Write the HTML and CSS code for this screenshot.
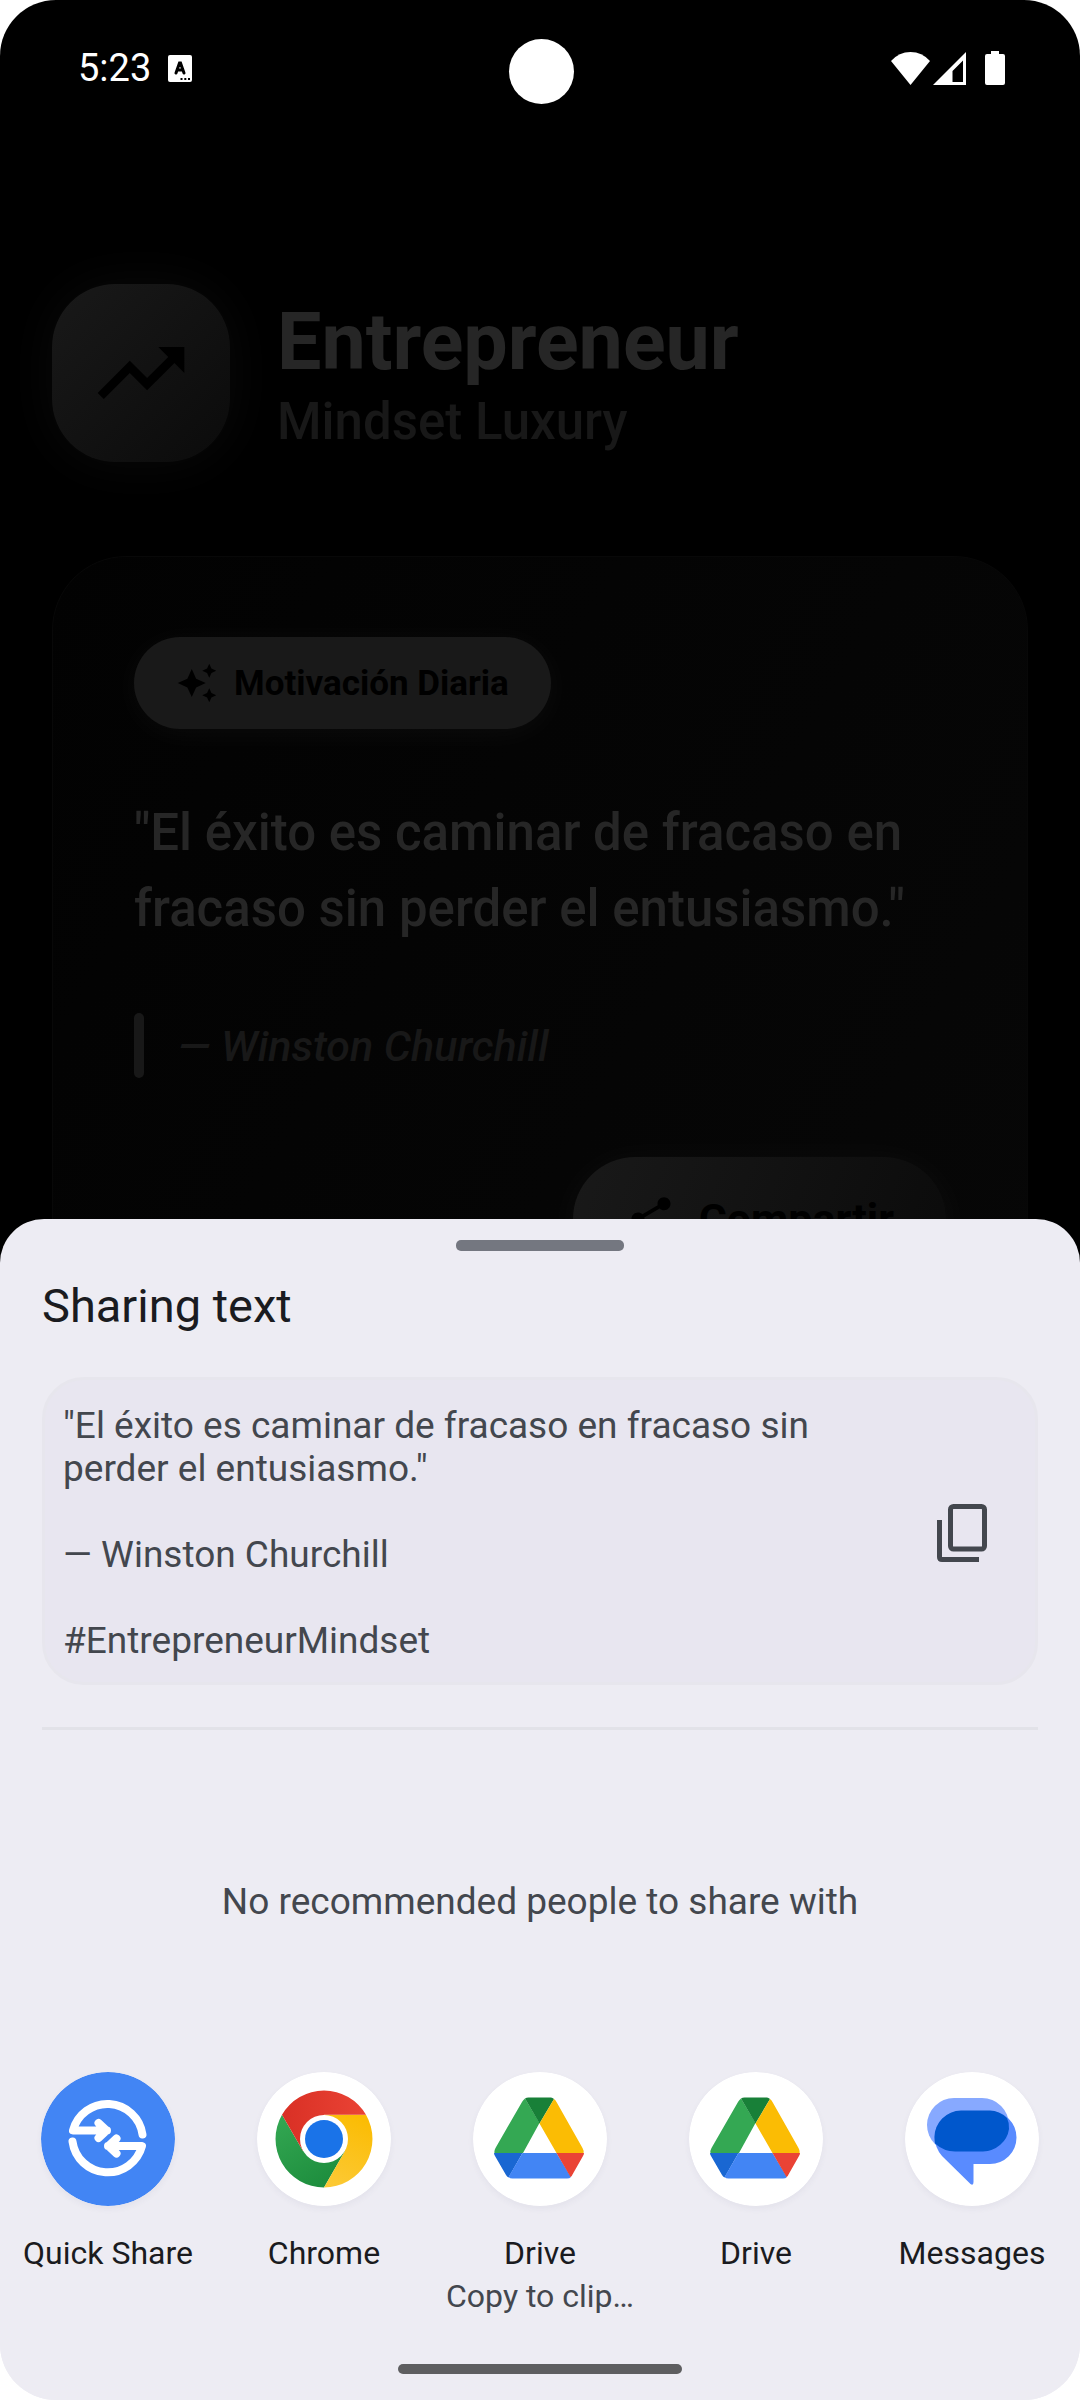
FILE: index.html
```html
<!DOCTYPE html>
<html lang="es">
<head>
<meta charset="utf-8">
<meta name="viewport" content="width=device-width, initial-scale=1">
<title>Entrepreneur Mindset Luxury</title>
<link rel="stylesheet" href="styles.css">
</head>
<body>
<div class="phone">
  <header class="status">
    <div class="status-left">
      <span>5:23</span>
      <svg class="status-app" viewBox="0 0 24 27" aria-hidden="true"><rect width="24" height="27" rx="2" fill="#fff"/><path d="M8 18 11.500 8h1L16 18M9.500 15h5" fill="none" stroke="#000" stroke-width="3" stroke-linecap="round"/><path d="M12.500 23h2v2h-2zM16.300 23h2v2h-2zM20 23h2v2h-2z"/></svg>
    </div>
    <div class="camera"></div>
    <div class="status-right">
      <svg class="wifi" viewBox="0 0 39 33" aria-hidden="true"><path d="M0 9Q8 0 19.500 0T39 9L19.500 33z" fill="#fff"/></svg>
      <svg class="signal" viewBox="0 0 33 33" aria-hidden="true"><path fill="#fff" fill-rule="evenodd" d="M33 0v33H0zM30 8.500 19.500 19v11H30z"/></svg>
      <svg class="battery" viewBox="0 0 20 34" aria-hidden="true"><path fill="#fff" d="M6 0h8v3h4q2 0 2 2v27q0 2-2 2H2q-2 0-2-2V5q0-2 2-2h4z"/></svg>
    </div>
  </header>

  <main class="app">
    <div class="brand">
      <div class="brand-icon">
        <svg viewBox="0 0 24 24" aria-hidden="true"><path d="m16 6 2.290 2.290-4.880 4.880-4-4L2 16.590 3.410 18l6-6 4 4 6.300-6.290L22 12V6z"/></svg>
      </div>
      <div class="brand-name">
        <h1>Entrepreneur</h1>
        <p class="tagline">Mindset Luxury</p>
      </div>
    </div>

    <article class="card">
      <div class="chip">
        <svg viewBox="0 0 24 24" aria-hidden="true"><path d="m19 9 1.250-2.750L23 5l-2.750-1.250L19 1l-1.250 2.750L15 5l2.750 1.250zM11.500 9.500 9 4 6.500 9.500 1 12l5.500 2.500L9 20l2.500-5.500L17 12zM19 15l-1.250 2.750L15 19l2.750 1.250L19 23l1.250-2.750L23 19l-2.750-1.250z"/></svg>
        <span>Motivación Diaria</span>
      </div>
      <blockquote>"El éxito es caminar de fracaso en fracaso sin perder el entusiasmo."</blockquote>
      <div class="author"><i class="bar"></i><cite>— Winston Churchill</cite></div>
      <button class="share" type="button">
        <svg viewBox="0 0 24 24" aria-hidden="true"><path d="M18 16.080c-.76 0-1.440.3-1.960.77L8.910 12.700c.05-.23.09-.46.09-.7s-.04-.47-.09-.7l7.050-4.110c.54.5 1.250.81 2.040.81 1.660 0 3-1.340 3-3s-1.340-3-3-3-3 1.340-3 3c0 .24.040.47.09.7L8.040 9.810C7.500 9.310 6.790 9 6 9c-1.660 0-3 1.340-3 3s1.340 3 3 3c.79 0 1.500-.31 2.040-.81l7.120 4.160c-.05.21-.08.43-.08.65 0 1.610 1.310 2.920 2.920 2.920s2.920-1.310 2.920-2.920-1.310-2.920-2.920-2.920"/></svg>
        <span>Compartir</span>
      </button>
    </article>
  </main>

  <section class="sheet" aria-label="Sharing text">
    <div class="handle"></div>
    <h2>Sharing text</h2>
    <div class="preview">
      <p>"El éxito es caminar de fracaso en fracaso sin perder el entusiasmo."<br><br>— Winston Churchill<br><br>#EntrepreneurMindset</p>
      <button class="copy" type="button" aria-label="Copy">
        <svg viewBox="0 0 50 58" aria-hidden="true"><g fill="none" stroke="#43474e" stroke-width="5"><rect x="13.500" y="2.500" width="34" height="42.500" rx="3"/><path d="M2.500 16V53q0 2.500 2.500 2.500h37"/></g></svg>
      </button>
    </div>
    <p class="empty">No recommended people to share with</p>
    <ul class="targets">
      <li><button type="button">
        <svg class="target-icon" viewBox="0 0 134 134" aria-hidden="true"><circle cx="67" cy="67" r="67" fill="#4285f4"/><g fill="none" stroke="#fff" stroke-width="8" stroke-linecap="round" stroke-linejoin="round"><path d="M101.500 62.500A35.500 35.500 0 0 0 32 58.500h34M57.500 51l8 7.500-8 7.500M31.500 69.500A35.500 35.500 0 0 0 101 74H67M75.500 66.500l-8 7.500 8 7.500"/></g></svg>
        <span>Quick Share</span></button></li>
      <li><button type="button">
        <svg class="target-icon" viewBox="0 0 134 134" aria-hidden="true">
          <defs>
            <linearGradient id="cr" x1="0" x2="1"><stop stop-color="#d93025"/><stop offset="1" stop-color="#ea4335"/></linearGradient>
            <linearGradient id="cg" x1="0" x2=".6" y1="0" y2="1"><stop stop-color="#34a853"/><stop offset="1" stop-color="#1e8e3e"/></linearGradient>
            <linearGradient id="cy" x1=".6" x2=".3" y1="0" y2="1"><stop stop-color="#fbbc04"/><stop offset="1" stop-color="#fcc934"/></linearGradient>
          </defs>
          <circle cx="67" cy="67" r="67" fill="#fff"/>
          <path fill="url(#cg)" d="M25 42.800A48.500 48.500 0 0 0 67 115.500L88 79 46 79z"/>
          <path fill="url(#cy)" d="M109 42.800A48.500 48.500 0 0 1 67 115.500L88 79.100 67 42.800z"/>
          <path fill="url(#cr)" d="M25 42.800A48.500 48.500 0 0 1 109 42.800H67L46 79z"/>
          <circle cx="67" cy="67" r="24" fill="#fff"/><circle cx="67" cy="67" r="19" fill="#1a73e8"/>
        </svg>
        <span>Chrome</span></button></li>
      <li><button type="button">
        <svg class="target-icon" viewBox="0 0 134 134" aria-hidden="true"><circle cx="67" cy="67" r="67" fill="#fff"/><g id="drive"><path fill="#34a853" d="M52 26.500 66.500 51 50 81H21.500q-.5-2.500 1-5L49 30q1-2 3-3.500"/><path fill="#188038" d="M52 26.500q1.500-1 3.500-1H78q1.500 0 3 1.500L66.500 51.500z"/><path fill="#fbbc04" d="M81 27q1.500 1 2.500 3l26 46q1.500 2.500 1 5H83.500l-17-29.500z"/><path fill="#1967d2" d="M21 81h28.500L35.500 105.500q-1.500-1-2.500-2.500L22 84q-1-1.500-1-3"/><path fill="#4285f4" d="M49.500 81h34L98 105q-1.500 1.500-4 1.500H39.500q-2.500 0-4-1.500z"/><path fill="#ea4335" d="M83.500 81h27.500q0 1.500-1 3l-10.500 18.500q-.5 1.500-2 2.500z"/></g></svg>
        <span>Drive</span><small>Copy to clip…</small></button></li>
      <li><button type="button">
        <svg class="target-icon" viewBox="0 0 134 134" aria-hidden="true"><circle cx="67" cy="67" r="67" fill="#fff"/><use href="#drive"/></svg>
        <span>Drive</span></button></li>
      <li><button type="button">
        <svg class="target-icon" viewBox="0 0 134 134" aria-hidden="true"><circle cx="67" cy="67" r="67" fill="#fff"/><rect x="22" y="26" width="82" height="54" rx="27" fill="#87a9ff"/><path fill="#598bff" d="M56 39H85a26.500 26.500 0 0 1 0 53H68.500V110q0 4-3 2L37 84Q30 76 29.500 65A27 26 0 0 1 56 39"/><path fill="#0057cc" d="M56 38.500H85Q94 38.500 102 46 104.500 51 104 57A27 26 0 0 1 78 79.500H50Q39 79.500 30 71.500 29.500 69 29.500 65A27 26.500 0 0 1 56 38.500"/></svg>
        <span>Messages</span></button></li>
    </ul>
    <div class="home-bar"></div>
  </section>
</div>
</body>
</html>
```
FILE: styles.css
```css
* { box-sizing: border-box; margin: 0; padding: 0; }

body { background: #fff; font-family: Roboto, "Noto Sans", sans-serif; }

button { border: 0; background: none; font: inherit; color: inherit; cursor: pointer; }
svg { display: block; flex: none; }

.phone {
  position: relative;
  min-height: 100vh;
  overflow: hidden;
  border-radius: 56px;
  background: linear-gradient(#000 75%, #edecf3 75%);
}

/* Status bar */
.status {
  display: grid;
  grid-template-columns: 1fr auto 1fr;
  align-items: center;
  height: 136px;
  padding: 0 75px 0 78px;
  color: #fff;
  font-size: 38px;
}
.status-left, .status-right { display: flex; align-items: center; }
.status-left { gap: 17px; }
.status-right { justify-content: flex-end; }
.status-app { width: 24px; height: 27px; }
.camera { width: 65px; height: 65px; margin-top: 7px; border-radius: 50%; background: #fff; }
.wifi { width: 39px; height: 33px; margin-right: 3px; }
.signal { width: 33px; height: 33px; margin-right: 19px; }
.battery { width: 20px; height: 34px; }

/* App behind the scrim */
.app { padding: 148px 52px 0; }
.brand { display: flex; align-items: center; gap: 47px; }
.brand-icon {
  display: grid;
  place-items: center;
  width: 178px;
  height: 178px;
  border-radius: 63px;
  background: linear-gradient(135deg, #191919, #0b0b0b);
  box-shadow: 0 0 52px rgba(255, 255, 255, .04);
}
.brand-icon svg { width: 104px; height: 104px; }
.brand-name { padding-top: 6px; }
h1 { color: #262626; font-size: 79px; font-weight: 700; line-height: 92px; }
.tagline { color: #181818; font-size: 51px; font-weight: 500; line-height: 68px; }

.card {
  display: flex;
  flex-direction: column;
  align-items: flex-start;
  margin-top: 94px;
  padding: 80px 81px;
  border: 1px solid #080808;
  border-radius: 74px;
  background: linear-gradient(120deg, #020202, #070707);
}
.chip {
  display: flex;
  align-items: center;
  gap: 16px;
  height: 92px;
  padding: 0 42px;
  border-radius: 46px;
  background: #191919;
  box-shadow: 0 4px 32px rgba(255, 255, 255, .04);
  color: #000;
  font-size: 35px;
  font-weight: 700;
}
.chip svg { width: 42px; height: 42px; }
blockquote {
  margin-top: 66px;
  color: #262626;
  font-size: 51px;
  font-weight: 500;
  line-height: 76px;
}
.author { display: flex; align-items: center; gap: 34px; margin-top: 66px; }
.bar { width: 10px; height: 65px; border-radius: 5px; background: #181818; }
cite { color: #181818; font-size: 43px; font-weight: 500; }
.share {
  display: flex;
  align-items: center;
  align-self: flex-end;
  gap: 22px;
  height: 124px;
  margin-top: 79px;
  padding: 0 52px;
  border-radius: 63px;
  background: linear-gradient(110deg, #191919, #0b0b0b);
  box-shadow: 0 4px 42px rgba(255, 255, 255, .04);
  color: #000;
  font-size: 43px;
  font-weight: 700;
}
.share svg { width: 52px; height: 52px; }

/* Share sheet */
.sheet {
  position: absolute;
  inset: auto 0 0;
  padding: 21px 0 26px;
  border-radius: 44px 44px 0 0;
  background: #edecf3;
  color: #1a1b20;
}
.handle { width: 168px; height: 11px; margin: 0 auto; border-radius: 5px; background: #747780; }
h2 { margin: 28px 42px 0; font-size: 47px; font-weight: 400; line-height: 54px; }
.preview {
  display: flex;
  align-items: center;
  justify-content: space-between;
  margin: 44px 42px 0;
  padding: 24px 48px 20px 18px;
  border: 3px solid #e7e6ed;
  border-radius: 42px;
  background: #e8e6f0;
  color: #43474e;
}
.preview p { max-width: 760px; font-size: 37px; line-height: 43px; }
.copy svg { width: 50px; height: 58px; }
.empty {
  margin: 42px 42px 0;
  padding: 150px 0 149px;
  border-top: 3px solid #e2e2e8;
  color: #43474e;
  font-size: 37px;
  line-height: 43px;
  text-align: center;
}
.targets { display: grid; grid-template-columns: repeat(5, 1fr); list-style: none; }
.targets button {
  display: flex;
  flex-direction: column;
  align-items: center;
  width: 100%;
  font-size: 32px;
  line-height: 43px;
}
.target-icon {
  width: 134px;
  height: 134px;
  margin-bottom: 26px;
  border-radius: 50%;
  box-shadow: 0 3px 6px rgba(60, 60, 100, .05);
}
.targets small { color: #43474e; font-size: 32px; }
.home-bar { width: 284px; height: 10px; margin: 46px auto 0; border-radius: 5px; background: #5e5e60; }
```
